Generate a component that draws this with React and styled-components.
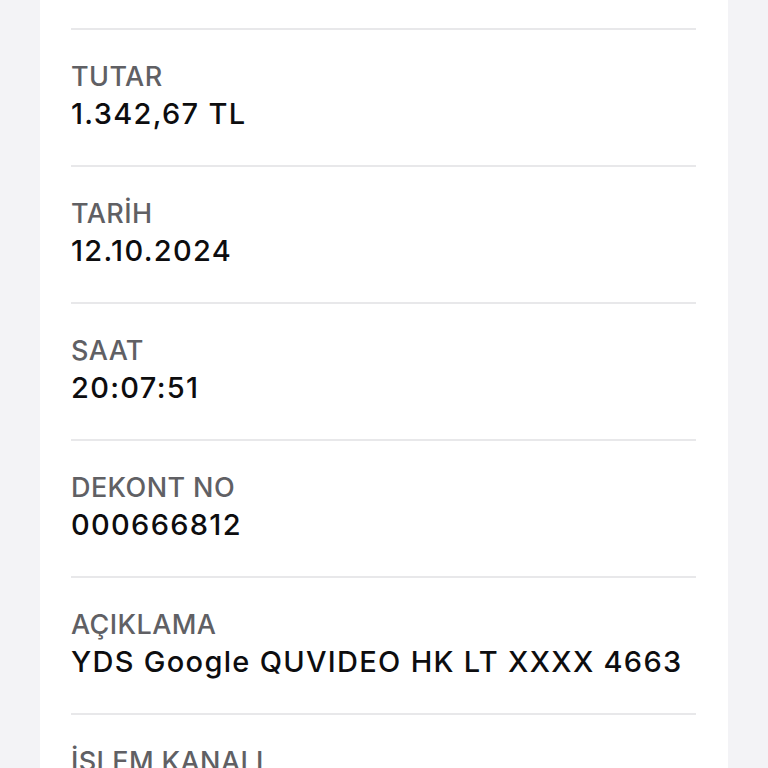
import styled, { createGlobalStyle } from "styled-components";

const Global = createGlobalStyle`
  html, body {
    margin: 0;
    padding: 0;
    background: #f3f3f6;
    font-family: Inter, "Noto Sans", sans-serif;
  }
`;

const Page = styled.div`
  display: flex;
  justify-content: center;
  height: 768px;
  overflow: hidden;
`;

const Card = styled.div`
  width: 688px;
  background: #ffffff;
  padding: 28px 32px 0 31px;
  box-sizing: border-box;
`;

const Row = styled.div`
  border-top: 2px solid #e8e8ea;
  padding: 30px 0 33px;
  display: flex;
  flex-direction: column;
  gap: 2px;
`;

const Label = styled.div`
  font-size: 27px;
  line-height: 34px;
  font-weight: 500;
  letter-spacing: 0.4px;
  color: #606064;
  text-transform: uppercase;
`;

const Value = styled.div`
  font-size: 29px;
  line-height: 36px;
  font-weight: 500;
  letter-spacing: 1.3px;
  color: #0d0d0f;
  min-height: 36px;
`;

const rows = [
  ["TUTAR", "1.342,67 TL"],
  ["TARİH", "12.10.2024"],
  ["SAAT", "20:07:51"],
  ["DEKONT NO", "000666812"],
  ["AÇIKLAMA", "YDS Google QUVIDEO HK LT XXXX 4663"],
  ["İŞLEM KANALI", ""],
];

export default function App() {
  return (
    <>
      <Global />
      <Page>
        <Card>
          {rows.map(([label, value]) => (
            <Row key={label}>
              <Label>{label}</Label>
              <Value>{value}</Value>
            </Row>
          ))}
        </Card>
      </Page>
    </>
  );
}
